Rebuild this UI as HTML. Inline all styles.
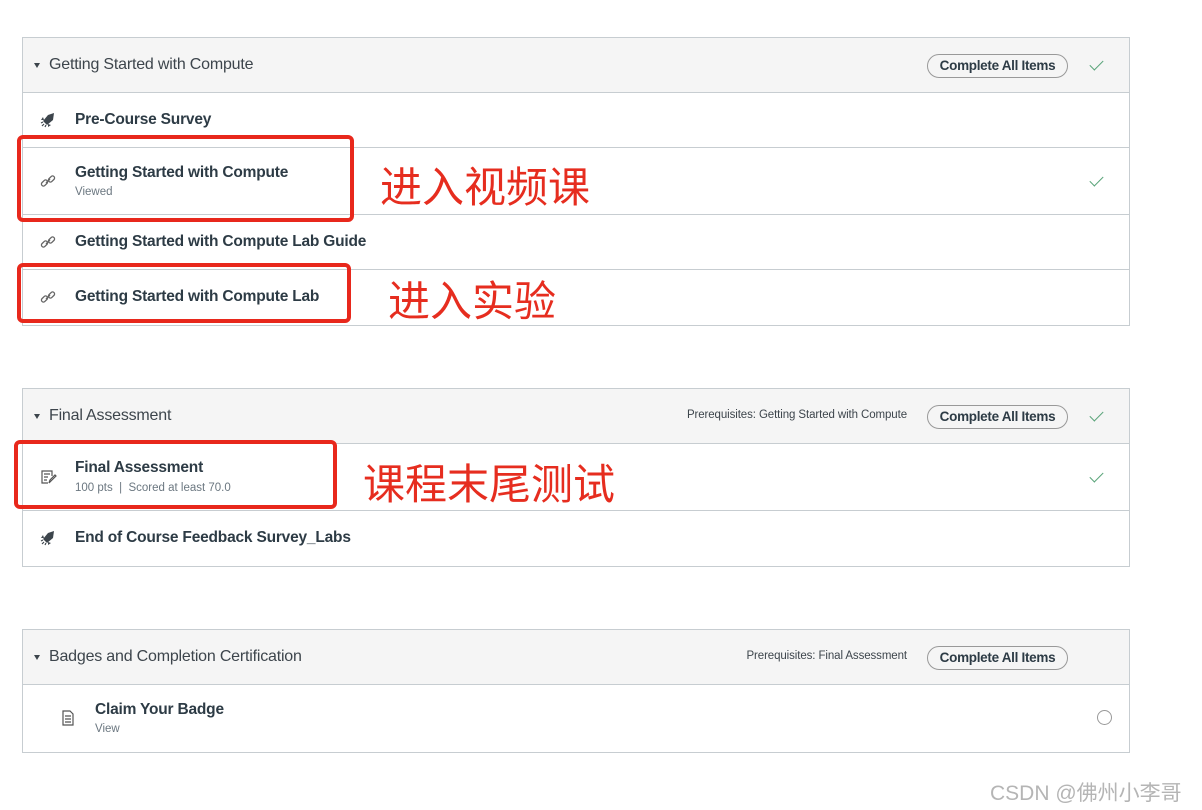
<!DOCTYPE html>
<html><head><meta charset="utf-8"><style>
*{box-sizing:border-box;margin:0;padding:0}
body{width:1202px;height:810px;background:#fff;position:relative;overflow:hidden;font-family:"Liberation Sans","Noto Sans CJK SC",sans-serif;color:#2d3b45}
.mod{position:absolute;left:22px;width:1108px;border:1px solid #c7cdd1;background:#fff}
.hd{height:55px;background:#f5f5f5;border-bottom:1px solid #c7cdd1;position:relative}
.hd .t{position:absolute;left:26px;top:18px;font-size:16px;color:#3d454c;letter-spacing:-0.2px}
.hd .tri{position:absolute;left:11px;top:25px;width:0;height:0;border-left:3.5px solid transparent;border-right:3.5px solid transparent;border-top:5px solid #3d454c}
.btn{position:absolute;left:904px;top:16px;width:141px;height:24px;border:1px solid #999;border-radius:12px;font-size:13.5px;font-weight:bold;color:#2d3b45;text-align:center;line-height:22px;background:#f5f5f5;letter-spacing:-0.3px}
.pre{position:absolute;right:222px;top:20px;font-size:11.5px;color:#3d454c;letter-spacing:-0.1px}
.ck{position:absolute;right:26px;width:13px;height:7px;border-left:1.3px solid #5aa47a;border-bottom:1.3px solid #5aa47a;transform:rotate(-45deg)}
.row{position:relative;border-bottom:1px solid #c7cdd1}
.row:last-child{border-bottom:none}
.row .n{position:absolute;left:52px;font-size:15.5px;font-weight:bold;color:#2d3b45;letter-spacing:-0.2px}
.row .s{position:absolute;left:52px;font-size:11.5px;color:#6b7780}
.ic{position:absolute;left:16px;width:18px;height:18px}
.rb{position:absolute;border:4px solid #e8281c;border-radius:6px}
.cn{position:absolute;color:#e62d1f;font-size:42px;font-family:"Noto Sans CJK SC",sans-serif;line-height:1}
</style></head><body>
<svg width="0" height="0" style="position:absolute">
<defs>
<symbol id="rk" viewBox="0 0 18 18"><path d="M15 2 L9 4 L4 10 L8 14 L14 9 Z" fill="#3d454c"/><path d="M5 9 L2 9 L4 6 Z M9 13 L9 16 L12 14 Z" fill="#3d454c"/><path d="M3 15 L5 13 M2 12 L4 11 M6 16 L7 14" stroke="#3d454c" stroke-width="1.2"/></symbol>
<symbol id="lk" viewBox="0 0 18 18"><g fill="none" stroke="#666" stroke-width="1.3"><rect x="2" y="9" width="7" height="4" rx="2" transform="rotate(-45 5.5 11)"/><rect x="9" y="5" width="7" height="4" rx="2" transform="rotate(-45 12.5 7)"/><path d="M7 11 L11 7"/></g></symbol>
<symbol id="qz" viewBox="0 0 18 18"><g fill="none" stroke="#555" stroke-width="1.2"><path d="M13 8 V3 H3 V15 H9"/><path d="M5 6 H11 M5 9 H9 M5 12 H8"/><path d="M10 15 L11 12 L16 7 L17 8 L12 13 Z"/></g></symbol>
<symbol id="pg" viewBox="0 0 18 18"><g fill="none" stroke="#555" stroke-width="1.2"><path d="M4 2 H11 L14 5 V16 H4 Z"/><path d="M6 7 H12 M6 10 H12 M6 13 H12"/></g></symbol>
</defs></svg>

<div class="mod" style="top:37px">
 <div class="hd"><div class="tri"></div><div class="t">Getting Started with Compute</div><div class="btn">Complete All Items</div><div class="ck" style="top:22px"></div></div>
 <div class="row" style="height:55px"><svg class="ic" style="top:18px"><use href="#rk"/></svg><div class="n" style="top:18px">Pre-Course Survey</div></div>
 <div class="row" style="height:67px"><svg class="ic" style="top:24px"><use href="#lk"/></svg><div class="n" style="top:16px">Getting Started with Compute</div><div class="s" style="top:38px">Viewed</div><div class="ck" style="top:28px"></div></div>
 <div class="row" style="height:55px"><svg class="ic" style="top:18px"><use href="#lk"/></svg><div class="n" style="top:18px">Getting Started with Compute Lab Guide</div></div>
 <div class="row" style="height:55px"><svg class="ic" style="top:18px"><use href="#lk"/></svg><div class="n" style="top:18px">Getting Started with Compute Lab</div></div>
</div>

<div class="mod" style="top:388px">
 <div class="hd"><div class="tri"></div><div class="t">Final Assessment</div><div class="pre">Prerequisites: Getting Started with Compute</div><div class="btn">Complete All Items</div><div class="ck" style="top:22px"></div></div>
 <div class="row" style="height:67px"><svg class="ic" style="top:24px"><use href="#qz"/></svg><div class="n" style="top:15px">Final Assessment</div><div class="s" style="top:38px">100 pts &nbsp;| &nbsp;Scored at least 70.0</div><div class="ck" style="top:28px"></div></div>
 <div class="row" style="height:55px"><svg class="ic" style="top:18px"><use href="#rk"/></svg><div class="n" style="top:18px">End of Course Feedback Survey_Labs</div></div>
</div>

<div class="mod" style="top:629px">
 <div class="hd"><div class="tri"></div><div class="t">Badges and Completion Certification</div><div class="pre">Prerequisites: Final Assessment</div><div class="btn">Complete All Items</div></div>
 <div class="row" style="height:67px"><svg class="ic" style="top:24px;left:36px"><use href="#pg"/></svg><div class="n" style="top:16px;left:72px">Claim Your Badge</div><div class="s" style="top:38px;left:72px">View</div><div style="position:absolute;right:17px;top:25px;width:15px;height:15px;border:1px solid #999;border-radius:50%"></div></div>
</div>

<div class="rb" style="left:17px;top:135px;width:337px;height:87px"></div>
<div class="rb" style="left:17px;top:263px;width:334px;height:60px"></div>
<div class="rb" style="left:14px;top:440px;width:323px;height:69px"></div>
<div class="cn" style="left:380px;top:164px">进入视频课</div>
<div class="cn" style="left:388px;top:278px">进入实验</div>
<div class="cn" style="left:363px;top:461px">课程末尾测试</div>
<div style="position:absolute;left:990px;top:777px;font-size:21px;color:#b5b5b5">CSDN @佛州小李哥</div>
</body></html>
